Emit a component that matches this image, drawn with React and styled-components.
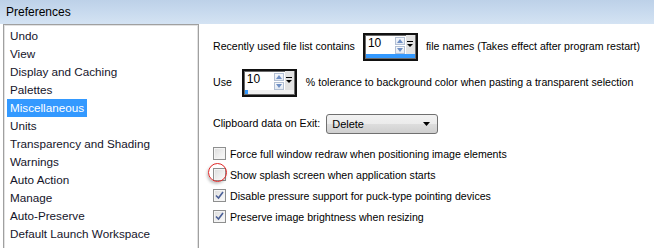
import React from 'react';
import styled, { createGlobalStyle } from 'styled-components';

const GlobalStyle = createGlobalStyle`
    html, body {
        margin: 0;
        padding: 0;
        background: #ffffff;
        overflow: hidden;
    }
`;

const Window = styled.div`
    width: 654px;
    height: 248px;
    display: flex;
    flex-direction: column;
    background: #ffffff;
    overflow: hidden;
    font-family: "Liberation Sans", Arial, sans-serif;
`;

const TitleBar = styled.div`
    height: 24px;
    flex-shrink: 0;
    display: flex;
    align-items: center;
    padding-left: 6px;
    background: linear-gradient(to bottom, #bdd1e8 0%, #c8daee 50%, #d4e3f3 100%);
    font-size: 12px;
    color: #000;
`;

const Body = styled.div`
    flex: 1;
    display: flex;
    min-height: 0;
`;

const ListBox = styled.div`
    width: 196px;
    height: 240px;
    margin-left: 3px;
    border: 1px solid #a0a0a0;
    border-bottom: none;
    box-shadow: inset 1px 1px 0 #e2e2e2, inset -1px 0 0 #e2e2e2;
    padding: 2px 0 0 3px;
    box-sizing: border-box;
    flex-shrink: 0;
`;

const ListItem = styled.div`
    height: 18px;
    line-height: 18px;
    font-size: 11.7px;
    color: #14142a;
    white-space: nowrap;

    span {
        display: inline-block;
        padding: 0 3px;
        background: ${p => (p.$selected ? '#3399ff' : 'transparent')};
        color: ${p => (p.$selected ? '#ffffff' : 'inherit')};
    }
`;

const Panel = styled.div`
    flex: 1;
    padding: 9px 0 0 14px;
    font-size: 10.6px;
    color: #000;
    display: flex;
    flex-direction: column;
`;

const SpinRow = styled.div`
    display: flex;
    align-items: center;
    height: 28px;
    margin-bottom: ${p => p.$gap || 0}px;
    white-space: nowrap;
`;

const Label = styled.span`
    margin-right: ${p => p.$right || 0}px;
    margin-left: ${p => p.$left || 0}px;
    position: relative;
    top: -1px;
`;

const SpinBox = styled.div`
    width: 55px;
    height: 28px;
    box-sizing: border-box;
    border: 2px solid #111;
    box-shadow: inset 0 0 0 1px #6a6a6a;
    display: flex;
    flex-direction: column;
    background: #fff;
    flex-shrink: 0;
`;

const SpinTop = styled.div`
    flex: 1;
    display: flex;
    padding: 2px 1px 0 3px;
`;

const SpinValue = styled.div`
    flex: 1;
    font-size: 12px;
    line-height: 13px;
    color: #000;
`;

const Arrows = styled.div`
    width: 10px;
    display: flex;
    flex-direction: column;
    gap: 1px;
    margin-right: 1px;
`;

const ArrowBtn = styled.div`
    height: 8px;
    box-sizing: border-box;
    border: 1px solid #b3c0d4;
    background: linear-gradient(to bottom, #f6f8fb, #e3e9f2);
    display: flex;
    align-items: center;
    justify-content: center;
`;

const DropBtn = styled.div`
    width: 9px;
    margin: -2px 0 0 0;
    background: #e2e2e2;
    display: flex;
    align-items: center;
    justify-content: center;
`;

const ProgressTrack = styled.div`
    height: 5px;
    margin: 0 1px 1px 1px;
    background: #f0f0f0;
`;

const ProgressFill = styled.div`
    height: 100%;
    width: ${p => p.$fill}%;
    background: #3399ff;
`;

const SelectRow = styled.div`
    display: flex;
    align-items: center;
    height: 20px;
    margin-top: 17px;
    margin-bottom: 9px;
    white-space: nowrap;
`;

const SelectBox = styled.div`
    width: 112px;
    height: 20px;
    box-sizing: border-box;
    border: 1px solid #707070;
    border-radius: 3px;
    background: linear-gradient(to bottom, #f2f2f2 0%, #ebebeb 50%, #dddddd 51%, #cfcfcf 100%);
    display: flex;
    align-items: center;
    justify-content: space-between;
    padding: 0 7px 0 5px;
    font-size: 11px;
`;

const CheckRow = styled.label`
    display: flex;
    align-items: center;
    height: 21px;
    white-space: nowrap;
    position: relative;
`;

const CheckBox = styled.span`
    width: 13px;
    height: 13px;
    box-sizing: border-box;
    border: 1px solid #8e8f8f;
    background: linear-gradient(135deg, #dcdcdc 0%, #f0f0f0 60%, #fafafa 100%);
    box-shadow: inset 0 0 0 1px #f4f4f4;
    margin: 0 4px 0 0;
    display: flex;
    align-items: center;
    justify-content: center;
    flex-shrink: 0;
`;

const Marker = styled.span`
    position: absolute;
    left: -5px;
    top: -1px;
    width: 19px;
    height: 19px;
    box-sizing: border-box;
    border: 1px solid #e02828;
    border-radius: 50%;
    box-shadow: -1px 2px 3px rgba(0, 0, 0, 0.25);
    pointer-events: none;
`;

const items = [
    'Undo',
    'View',
    'Display and Caching',
    'Palettes',
    'Miscellaneous',
    'Units',
    'Transparency and Shading',
    'Warnings',
    'Auto Action',
    'Manage',
    'Auto-Preserve',
    'Default Launch Workspace',
];

const checks = [
    { text: 'Force full window redraw when positioning image elements', checked: false },
    { text: 'Show splash screen when application starts', checked: false, marked: true },
    { text: 'Disable pressure support for puck-type pointing devices', checked: true },
    { text: 'Preserve image brightness when resizing', checked: true },
];

function Spin({ value, fill }) {
    return (
        <SpinBox>
            <SpinTop>
                <SpinValue>{value}</SpinValue>
                <Arrows>
                    <ArrowBtn>
                        <svg width="6" height="4" viewBox="0 0 6 4"><path d="M0 4 L3 0 L6 4 Z" fill="#6f8fc4" /></svg>
                    </ArrowBtn>
                    <ArrowBtn>
                        <svg width="6" height="4" viewBox="0 0 6 4"><path d="M0 0 L6 0 L3 4 Z" fill="#6f8fc4" /></svg>
                    </ArrowBtn>
                </Arrows>
                <DropBtn>
                    <svg width="6" height="7" viewBox="0 0 6 7">
                        <rect x="0" y="0" width="6" height="1" fill="#000" />
                        <path d="M0 3 L6 3 L3 6 Z" fill="#000" />
                    </svg>
                </DropBtn>
            </SpinTop>
            <ProgressTrack>
                <ProgressFill $fill={fill} />
            </ProgressTrack>
        </SpinBox>
    );
}

function App() {
    return (
        <Window>
            <GlobalStyle />
            <TitleBar>Preferences</TitleBar>
            <Body>
                <ListBox>
                    {items.map(item => (
                        <ListItem key={item} $selected={item === 'Miscellaneous'}>
                            <span>{item}</span>
                        </ListItem>
                    ))}
                </ListBox>
                <Panel>
                    <SpinRow $gap={8}>
                        <Label $right={8}>Recently used file list contains</Label>
                        <Spin value="10" fill={100} />
                        <Label $left={8}>file names (Takes effect after program restart)</Label>
                    </SpinRow>
                    <SpinRow>
                        <Label $right={10}>Use</Label>
                        <Spin value="10" fill={6} />
                        <Label $left={9}>% tolerance to background color when pasting a transparent selection</Label>
                    </SpinRow>
                    <SelectRow>
                        <Label $right={6}>Clipboard data on Exit:</Label>
                        <SelectBox>
                            <span>Delete</span>
                            <svg width="7" height="4" viewBox="0 0 7 4"><path d="M0 0 L7 0 L3.5 4 Z" fill="#000" /></svg>
                        </SelectBox>
                    </SelectRow>
                    {checks.map(c => (
                        <CheckRow key={c.text}>
                            <CheckBox>
                                {c.checked && (
                                    <svg width="9" height="9" viewBox="0 0 9 9">
                                        <path d="M1 4.5 L3.5 7 L8 1" stroke="#4a5f97" strokeWidth="1.6" fill="none" />
                                    </svg>
                                )}
                            </CheckBox>
                            <span>{c.text}</span>
                            {c.marked && <Marker />}
                        </CheckRow>
                    ))}
                </Panel>
            </Body>
        </Window>
    );
}

export default App;
